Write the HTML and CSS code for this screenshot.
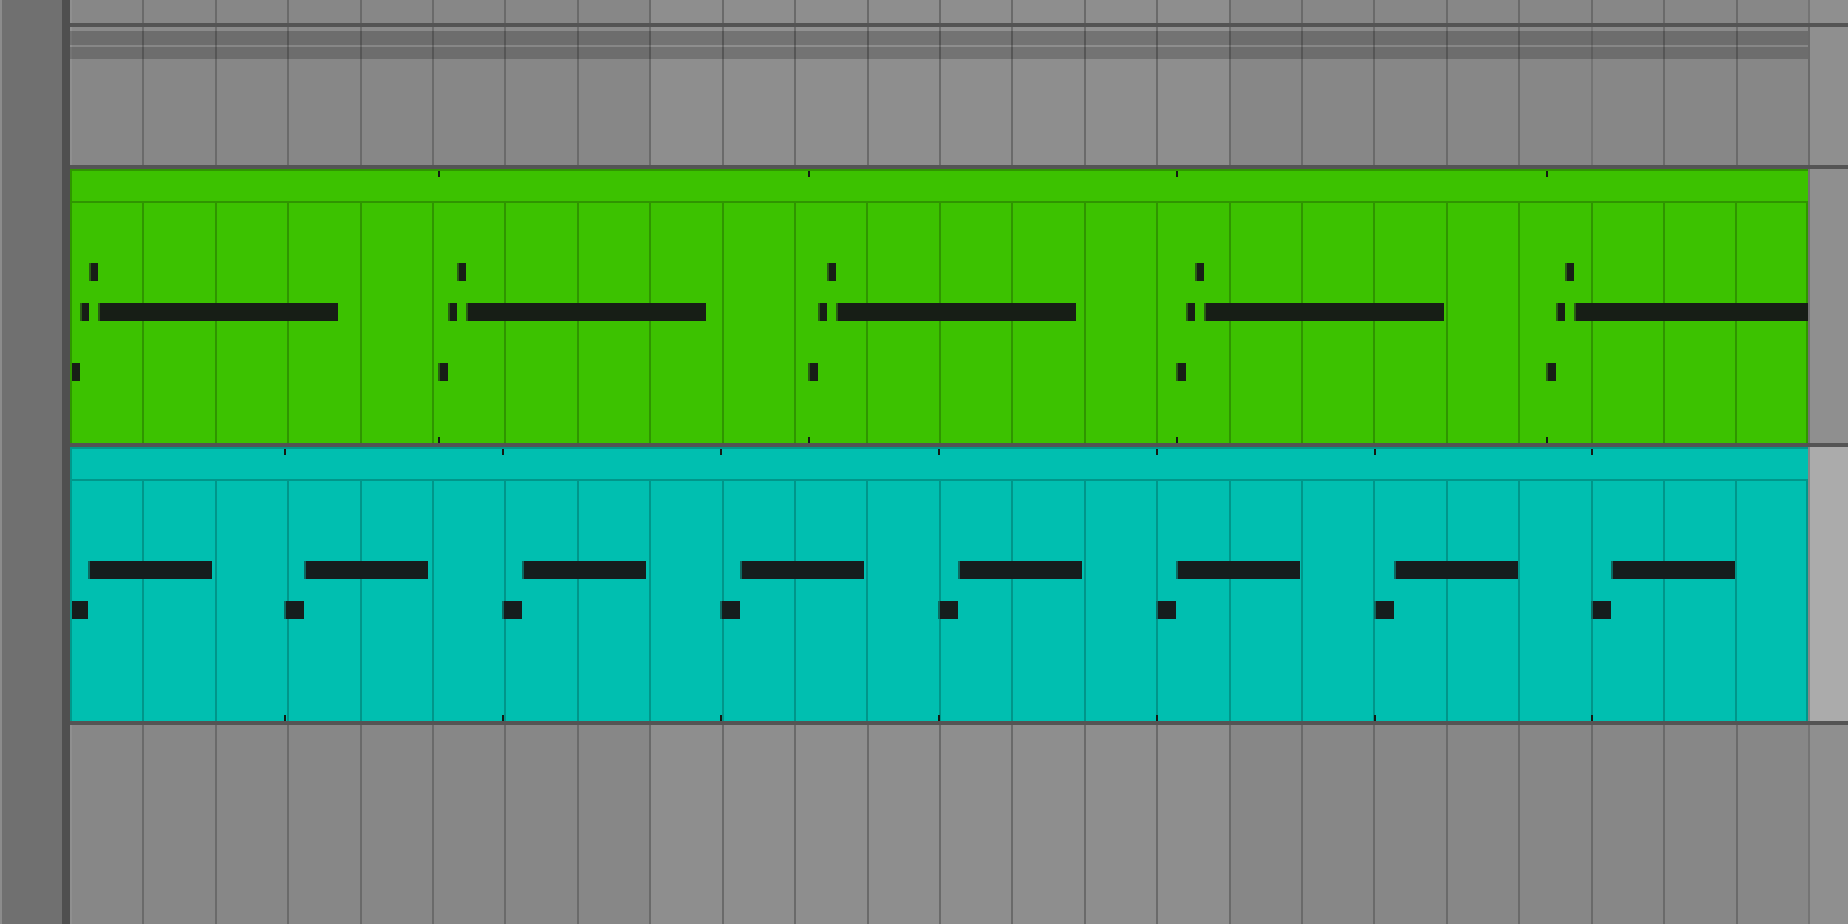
FILE: index.html
```html
<!DOCTYPE html>
<html lang="en">
<head>
    <meta charset="UTF-8">
    <meta name="viewport" content="width=device-width, initial-scale=1.0">
    <title>Arrangement</title>
    <link rel="stylesheet" href="styles.css">
</head>
<body>
    <div class="sidebar"></div>
    <div class="divider"></div>
    <div class="tracks">
        <div class="lane lane-top"></div>
        <div class="sep"></div>
        <div class="lane lane-auto">
            <div class="band band-light"></div>
            <div class="band band-a"></div>
            <div class="band band-b"></div>
        </div>
        <div class="sep"></div>
        <div class="clip-row">
            <div class="clip clip-green" id="clipGreen">
                <div class="clip-head"></div>
                <div class="clip-body"></div>
            </div>
            <div class="clip-tail"></div>
        </div>
        <div class="sep"></div>
        <div class="clip-row">
            <div class="clip clip-teal" id="clipTeal">
                <div class="clip-head"></div>
                <div class="clip-body"></div>
            </div>
            <div class="clip-tail selected"></div>
        </div>
        <div class="sep"></div>
        <div class="lane lane-bottom"></div>
    </div>

    <script>
        // x of the clip content edge on screen
        const ORIGIN = 72;

        const greenLoops = [70, 438, 808, 1176, 1546];
        const greenNotes = [
            { x: 0, w: 10, y: 160 },
            { x: 10, w: 9, y: 100 },
            { x: 19, w: 9, y: 60 },
            { x: 28, w: 240, y: 100 }
        ];

        const tealLoops = [68, 284, 502, 720, 938, 1156, 1374, 1591];
        const tealNotes = [
            { x: 0, w: 20, y: 120 },
            { x: 20, w: 124, y: 80 }
        ];

        function fillLane(lane) {
            for (let i = 0; i < 25; i++) {
                const cell = document.createElement('div');
                cell.className = 'beat';
                if (i >= 8 && i < 16) cell.classList.add('alt');
                if (i === 24) cell.classList.add('end');
                lane.appendChild(cell);
            }
        }

        function fillClip(clip, loops, notes) {
            const head = clip.querySelector('.clip-head');
            const body = clip.querySelector('.clip-body');

            for (let i = 0; i < 24; i++) {
                const cell = document.createElement('div');
                cell.className = 'cell';
                body.appendChild(cell);
            }

            loops.forEach((start, k) => {
                notes.forEach(n => {
                    const note = document.createElement('div');
                    note.className = 'note';
                    note.style.left = (start + n.x - ORIGIN) + 'px';
                    note.style.top = n.y + 'px';
                    note.style.width = n.w + 'px';
                    body.appendChild(note);
                });
                if (k === 0) return;
                const top = document.createElement('div');
                top.className = 'tick';
                top.style.left = (start - ORIGIN) + 'px';
                head.appendChild(top);
                const bottom = document.createElement('div');
                bottom.className = 'tick tick-bottom';
                bottom.style.left = (start - ORIGIN) + 'px';
                body.appendChild(bottom);
            });
        }

        document.querySelectorAll('.lane').forEach(fillLane);
        fillClip(document.getElementById('clipGreen'), greenLoops, greenNotes);
        fillClip(document.getElementById('clipTeal'), tealLoops, tealNotes);
    </script>
</body>
</html>
```

FILE: styles.css
```css
body {
    margin: 0;
    padding: 0;
    height: 924px;
    display: flex;
    overflow: hidden;
    background-color: #707070;
    font-family: "Liberation Sans", Arial, sans-serif;
}
.sidebar {
    width: 62px;
    box-sizing: border-box;
    border-left: 2px solid #8c8c8c;
    background-color: #707070;
}
.divider {
    width: 8px;
    background-color: #4f4f4f;
}
.tracks {
    flex: 1;
    display: flex;
    flex-direction: column;
}
.sep {
    height: 4px;
    background-color: #545454;
}

/* gray lanes */
.lane {
    position: relative;
    display: grid;
    grid-template-columns: repeat(24, 1fr) 38px;
    border-left: 2px solid #8f8f8f;
}
.lane-top {
    height: 23px;
}
.lane-auto {
    height: 138px;
}
.lane-bottom {
    flex: 1;
}
.beat {
    background-color: #878787;
    border-right: 2px solid #6a6a6a;
}
.beat.alt {
    background-color: #8e8e8e;
}
.beat.end {
    background-color: #8f8f8f;
    border-right: none;
}
.beat:nth-child(24) {
    border-right-color: #747474;
}
.band {
    position: absolute;
    left: -2px;
    width: 1738px;
}
.band-light {
    top: 0;
    height: 4px;
    background-color: rgba(255, 255, 255, 0.03);
}
.band-a {
    top: 4px;
    height: 14px;
    background-color: rgba(0, 0, 0, 0.19);
}
.band-b {
    top: 20px;
    height: 12px;
    background-color: rgba(0, 0, 0, 0.19);
}

/* clips */
.clip-row {
    height: 274px;
    display: flex;
}
.clip {
    width: 1738px;
    box-sizing: border-box;
    border-left: 2px solid;
    border-top: 2px solid;
    display: flex;
    flex-direction: column;
}
.clip-head {
    position: relative;
    height: 30px;
    border-bottom: 2px solid;
}
.clip-body {
    position: relative;
    height: 240px;
    overflow: hidden;
    display: grid;
    grid-template-columns: repeat(23, 72.42px) 1fr;
}
.cell {
    border-right: 2px solid;
}
.cell:last-child {
    border-right: none;
}
.clip-tail {
    flex: 1;
    border-left: 2px solid #717171;
    background-color: #8f8f8f;
}
.clip-tail.selected {
    border-left-color: #868686;
    background-color: #ababab;
}

.clip-green {
    background-color: #3cc200;
    border-color: #2f9500;
}
.clip-green .clip-head,
.clip-green .cell {
    border-color: #2f9500;
}
.clip-teal {
    background-color: #00bfb0;
    border-color: #00998c;
}
.clip-teal .clip-head,
.clip-teal .cell {
    border-color: #00968a;
}

.note {
    position: absolute;
    height: 18px;
    box-sizing: border-box;
    border-left: 2px solid;
}
.clip-green .note {
    background-color: #171e16;
    border-left-color: #2a5e14;
}
.clip-teal .note {
    background-color: #151d1d;
    border-left-color: #0c6a62;
}
.tick {
    position: absolute;
    top: 0;
    width: 2px;
    height: 6px;
    background-color: #141a14;
}
.tick-bottom {
    top: auto;
    bottom: 0;
}
```
